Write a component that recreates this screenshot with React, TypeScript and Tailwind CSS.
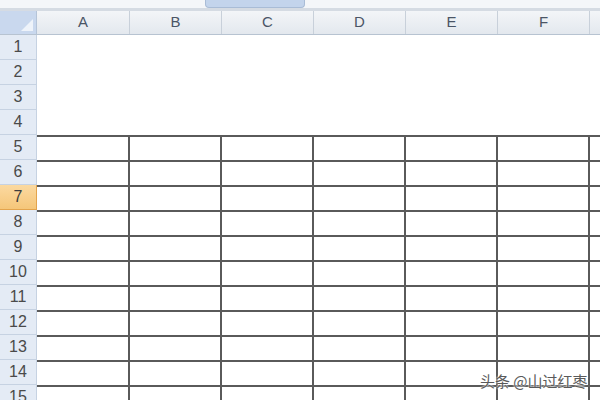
import React from "react";

const cols = ["A", "B", "C", "D", "E", "F", ""];
const widths = ["w-[93px]", "w-[92px]", "w-[92px]", "w-[92px]", "w-[92px]", "w-[92px]", "w-[92px]"];
const rows = Array.from({ length: 15 }, (_, i) => i + 1);

export default function App() {
  return (
    <div className="relative w-[600px] h-[400px] overflow-hidden bg-white font-['Liberation_Sans',Arial,sans-serif]">
      {/* top strip */}
      <div className="flex h-[8px] bg-[#f4f6f9]">
        <div className="w-[205px] shrink-0" />
        <div className="w-[100px] shrink-0 rounded-b-[4px] bg-[#c3d4ec] border border-t-0 border-[#a9bcd6]" />
        <div className="flex-1" />
      </div>
      <div className="h-[3px] bg-[#d5dbe3]" />
      {/* header row */}
      <div className="flex h-[24px] border-b border-[#b7c3d1]">
        <div className="relative w-[37px] shrink-0 bg-[#c9d8ee] border-r border-[#b5c4d8]">
          <div className="absolute right-[3px] bottom-[3px] w-0 h-0 border-l-[12px] border-l-transparent border-b-[12px] border-b-[#eef3fa]" />
        </div>
        {cols.map((c, i) => (
          <div
            key={i}
            className={`${widths[i]} shrink-0 flex items-center justify-center bg-gradient-to-b from-[#f3f5f8] to-[#e3e8ee] border-r border-[#c8d0da] text-[15px] text-[#4a5566]`}
          >
            {c}
          </div>
        ))}
      </div>
      {/* body rows */}
      {rows.map((r) => {
        const grid = r >= 5;
        const sel = r === 7;
        return (
          <div key={r} className="flex h-[25px]">
            <div
              className={`w-[37px] shrink-0 flex items-center justify-center border-r border-b text-[16px] ${
                sel
                  ? "bg-gradient-to-b from-[#fbd9a0] to-[#f5c679] border-[#e3a44d] text-[#3e3e3e]"
                  : "bg-[#e4ebf5] border-[#c6d2e2] text-[#4a4a4a]"
              }`}
            >
              {r}
            </div>
            {cols.map((_, i) => (
              <div
                key={i}
                className={`${widths[i]} shrink-0 ${grid ? "border-t-2 border-r-2 border-[#5a5a5a]" : ""}`}
              />
            ))}
          </div>
        );
      })}
      {/* watermark */}
      <div className="absolute left-[480px] top-[370px] text-[15px] text-[#5a5a5a] font-['Noto_Sans_CJK_SC',sans-serif] [text-shadow:0_0_2px_#fff,0_0_2px_#fff]">
        头条 @山过红枣
      </div>
    </div>
  );
}
